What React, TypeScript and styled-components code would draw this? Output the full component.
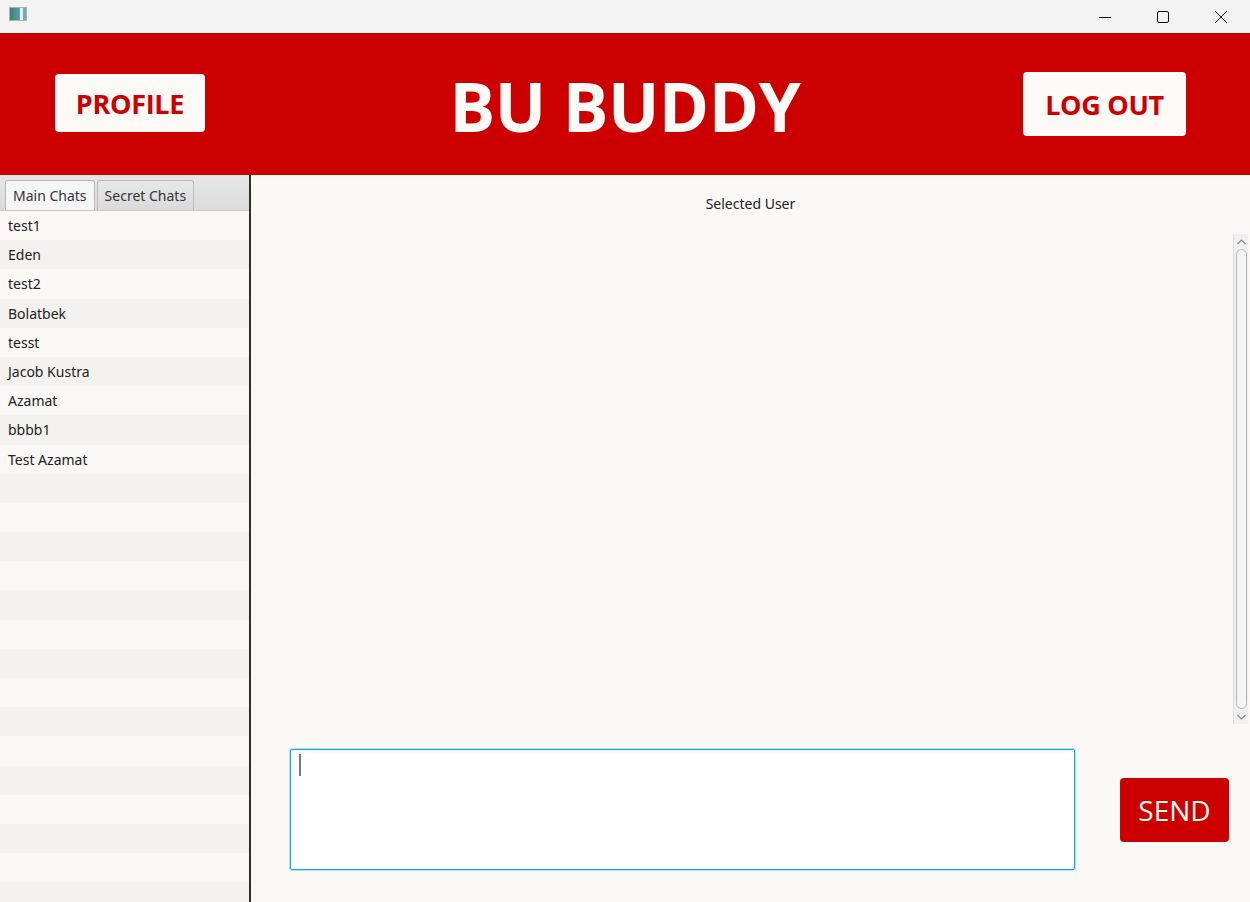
import React from "react";
import styled, { createGlobalStyle } from "styled-components";

const Global = createGlobalStyle`
  html, body { margin: 0; padding: 0; }
  body { width: 1250px; height: 902px; overflow: hidden; font-family: "Noto Sans", "Open Sans", sans-serif; }
  #root { height: 902px; }
`;

const Window = styled.div`
  width: 1250px;
  height: 902px;
  display: flex;
  flex-direction: column;
  background: #f9f8f5;
`;

const TitleBar = styled.div`
  height: 33px;
  flex: none;
  background: #f3f3f3;
  display: flex;
  align-items: center;
  justify-content: space-between;
`;

const AppIcon = styled.div`
  width: 16px;
  height: 12px;
  margin-left: 9px;
  margin-top: -6px;
  border: 1px solid #a9b0b6;
  background: linear-gradient(90deg, #3d7f6e 0%, #5c9fb0 60%, #e8eef0 61%, #e8eef0 80%, #6ab0a8 81%);
`;

const Controls = styled.div`
  display: flex;
  height: 33px;
`;

const Ctl = styled.div`
  width: 58px;
  height: 33px;
  display: flex;
  align-items: center;
  justify-content: center;
`;

const Header = styled.header`
  height: 142px;
  flex: none;
  background: #cc0000;
  display: flex;
  align-items: center;
  justify-content: space-between;
  padding: 0 64px 0 55px;
  position: relative;
`;

const HeaderButton = styled.button<{ $w: number; $h: number; $dy: number }>`
  width: ${(p) => p.$w}px;
  height: ${(p) => p.$h}px;
  margin-top: ${(p) => p.$dy}px;
  border: none;
  border-radius: 4px;
  background: #fbfaf7;
  color: #cc0000;
  font-family: "Open Sans", sans-serif;
  font-weight: 700;
  font-size: 27px;
  letter-spacing: -0.3px;
  padding: 0;
  display: flex;
  align-items: center;
  justify-content: center;
`;

const Title = styled.h1`
  margin: 0;
  color: #fbfaf7;
  font-family: "Open Sans", sans-serif;
  font-weight: 700;
  font-size: 68px;
  letter-spacing: -0.5px;
  line-height: 1;
  position: absolute;
  left: 0;
  right: 0;
  text-align: center;
  top: 39px;
  pointer-events: none;
`;

const Body = styled.div`
  flex: 1;
  display: flex;
  min-height: 0;
`;

const LeftPanel = styled.div`
  width: 249px;
  flex: none;
  display: flex;
  flex-direction: column;
  border-right: 2px solid #2e2e2e;
`;

const TabHeader = styled.div`
  height: 36px;
  flex: none;
  background: linear-gradient(#e6e6e6, #dcdcdc);
  border-bottom: 1px solid #c8c8c8;
  box-sizing: border-box;
  display: flex;
  align-items: flex-end;
  padding-left: 5px;
  gap: 2px;
`;

const Tab = styled.div<{ $active?: boolean }>`
  height: 30px;
  box-sizing: border-box;
  padding: 0 7px;
  border: 1px solid #b8b8b8;
  border-bottom: none;
  border-radius: 3px 3px 0 0;
  background: ${(p) => (p.$active ? "#f6f6f6" : "linear-gradient(#e8e8e8, #dadada)")};
  color: #333;
  font-size: 14px;
  display: flex;
  align-items: center;
  font-family: "Noto Sans", sans-serif;
`;

const List = styled.div`
  flex: 1;
  overflow: hidden;
`;

const Row = styled.div<{ $odd: boolean }>`
  height: 29.2px;
  box-sizing: border-box;
  padding-left: 8px;
  display: flex;
  align-items: center;
  font-size: 14px;
  color: #222;
  background: ${(p) => (p.$odd ? "#f3f2ef" : "#f9f8f5")};
`;

const RightPanel = styled.div`
  flex: 1;
  display: flex;
  flex-direction: column;
  background: #f9f8f5;
`;

const SelectedUser = styled.div`
  height: 59px;
  flex: none;
  text-align: center;
  font-size: 14px;
  color: #222;
  padding-top: 19px;
  box-sizing: border-box;
`;

const MessagesArea = styled.div`
  height: 490px;
  flex: none;
  display: flex;
  justify-content: flex-end;
  padding-right: 2px;
`;

const ScrollBar = styled.div`
  width: 15px;
  height: 490px;
  box-sizing: border-box;
  background: #efefef;
  border-left: 1px solid #dcdcdc;
  display: flex;
  flex-direction: column;
  align-items: center;
`;

const Arrow = styled.div`
  height: 15px;
  width: 15px;
  display: flex;
  align-items: center;
  justify-content: center;
`;

const Thumb = styled.div`
  flex: 1;
  width: 11px;
  box-sizing: border-box;
  border: 1px solid #b5b5b5;
  border-radius: 6px;
  background: #f4f4f4;
`;

const Composer = styled.div`
  flex: 1;
  display: flex;
  align-items: flex-start;
  padding: 25px 20px 0 39px;
`;

const TextArea = styled.div`
  width: 785px;
  height: 121px;
  box-sizing: border-box;
  background: #fff;
  border: 1px solid #10a9e2;
  border-radius: 2px;
  box-shadow: 0 0 0 1px rgba(16, 169, 226, 0.3), inset 0 2px 3px rgba(0, 0, 0, 0.06);
  padding: 4px 8px;
`;

const Caret = styled.div`
  width: 2px;
  height: 22px;
  background: #7a7a7a;
`;

const SendButton = styled.button`
  margin-left: 45px;
  margin-top: 29px;
  width: 109px;
  height: 64px;
  border: none;
  border-radius: 4px;
  background: #cc0000;
  color: #fbfaf7;
  font-family: "Open Sans", sans-serif;
  font-size: 28px;
  font-weight: 400;
  padding: 0;
`;

const users = ["test1", "Eden", "test2", "Bolatbek", "tesst", "Jacob Kustra", "Azamat", "bbbb1", "Test Azamat"];

export default function App() {
  const rows = Array.from({ length: 24 }, (_, i) => users[i] ?? "");
  return (
    <>
      <Global />
      <Window>
        <TitleBar>
          <AppIcon />
          <Controls>
            <Ctl>
              <svg width="14" height="14" viewBox="0 0 14 14">
                <path d="M1 7.5h12" stroke="#111" strokeWidth="1" />
              </svg>
            </Ctl>
            <Ctl>
              <svg width="14" height="14" viewBox="0 0 14 14">
                <rect x="1.5" y="1.5" width="11" height="11" rx="1.5" fill="none" stroke="#111" strokeWidth="1" />
              </svg>
            </Ctl>
            <Ctl>
              <svg width="14" height="14" viewBox="0 0 14 14">
                <path d="M1 1L13 13M13 1L1 13" stroke="#111" strokeWidth="1" />
              </svg>
            </Ctl>
          </Controls>
        </TitleBar>
        <Header>
          <HeaderButton $w={150} $h={58} $dy={-2}>PROFILE</HeaderButton>
          <Title>BU BUDDY</Title>
          <HeaderButton $w={163} $h={64} $dy={0}>LOG OUT</HeaderButton>
        </Header>
        <Body>
          <LeftPanel>
            <TabHeader>
              <Tab $active>Main Chats</Tab>
              <Tab>Secret Chats</Tab>
            </TabHeader>
            <List>
              {rows.map((u, i) => (
                <Row key={i} $odd={i % 2 === 1}>{u}</Row>
              ))}
            </List>
          </LeftPanel>
          <RightPanel>
            <SelectedUser>Selected User</SelectedUser>
            <MessagesArea>
              <ScrollBar>
                <Arrow>
                  <svg width="9" height="6" viewBox="0 0 9 6">
                    <path d="M0.5 5L4.5 1L8.5 5" fill="none" stroke="#888" strokeWidth="1.2" />
                  </svg>
                </Arrow>
                <Thumb />
                <Arrow>
                  <svg width="9" height="6" viewBox="0 0 9 6">
                    <path d="M0.5 1L4.5 5L8.5 1" fill="none" stroke="#888" strokeWidth="1.2" />
                  </svg>
                </Arrow>
              </ScrollBar>
            </MessagesArea>
            <Composer>
              <TextArea>
                <Caret />
              </TextArea>
              <SendButton>SEND</SendButton>
            </Composer>
          </RightPanel>
        </Body>
      </Window>
    </>
  );
}
